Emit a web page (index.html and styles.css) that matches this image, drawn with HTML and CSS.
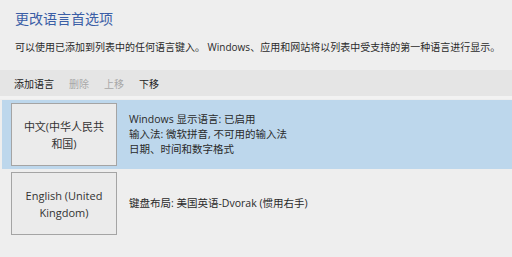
FILE: index.html
```html
<!DOCTYPE html>
<html lang="zh-CN">
<head>
<meta charset="utf-8">
<link rel="stylesheet" href="styles.css">
</head>
<body>
<div class="page">
  <h1 class="title">更改语言首选项</h1>
  <p class="desc">可以使用已添加到列表中的任何语言键入。 Windows、应用和网站将以列表中受支持的第一种语言进行显示。</p>
  <div class="toolbar">
    <span class="tool">添加语言</span>
    <span class="tool disabled">删除</span>
    <span class="tool disabled">上移</span>
    <span class="tool">下移</span>
  </div>
  <div class="list">
    <div class="row selected">
      <div class="tile">中文(中华人民共<br>和国)</div>
      <div class="info">
        <div>Windows 显示语言: 已启用</div>
        <div>输入法: 微软拼音, 不可用的输入法</div>
        <div>日期、时间和数字格式</div>
      </div>
    </div>
    <div class="row">
      <div class="tile">English (United<br>Kingdom)</div>
      <div class="info">
        <div>键盘布局: 美国英语-Dvorak (惯用右手)</div>
      </div>
    </div>
  </div>
</div>
</body>
</html>
```
FILE: styles.css
```css
html, body {
  margin: 0;
  padding: 0;
  background: #eeeeee;
}
.page {
  width: 512px;
  height: 257px;
  font-family: "Open Sans", "Noto Sans CJK SC", sans-serif;
  color: #333333;
  overflow: hidden;
}
.title {
  margin: 0;
  padding: 8px 0 0 15px;
  font-family: "Noto Sans CJK SC", sans-serif;
  font-size: 14px;
  font-weight: normal;
  line-height: 20px;
  color: #3b5ea6;
}
.desc {
  margin: 0;
  padding: 0 0 0 15px;
  margin-top: 12px;
  font-size: 10px;
  line-height: 14px;
  color: #2a2a2a;
}
.toolbar {
  margin-top: 16px;
  height: 26px;
  background: #e5e5e5;
  border-bottom: 3px solid #f2f2f2;
  display: flex;
  align-items: center;
  padding-left: 14px;
  gap: 15px;
  font-family: "Noto Sans CJK SC", sans-serif;
  font-size: 10px;
  color: #222222;
}
.tool.disabled {
  color: #a8a8a8;
}
.list {
  margin-top: 1px;
  display: flex;
  flex-direction: column;
}
.row {
  display: flex;
  align-items: center;
  padding: 3px 0 3px 11px;
  gap: 12px;
}
.row.selected {
  background: #bdd7ec;
  margin-left: 2px;
  padding-left: 9px;
}
.tile {
  box-sizing: border-box;
  width: 106px;
  height: 63px;
  border: 1px solid #a4a4a4;
  background: #ebebeb;
  display: flex;
  align-items: center;
  justify-content: center;
  text-align: center;
  font-size: 11px;
  line-height: 17px;
  color: #333333;
}
.info {
  font-size: 10.5px;
  line-height: 15px;
  color: #2a2a2a;
}
```
